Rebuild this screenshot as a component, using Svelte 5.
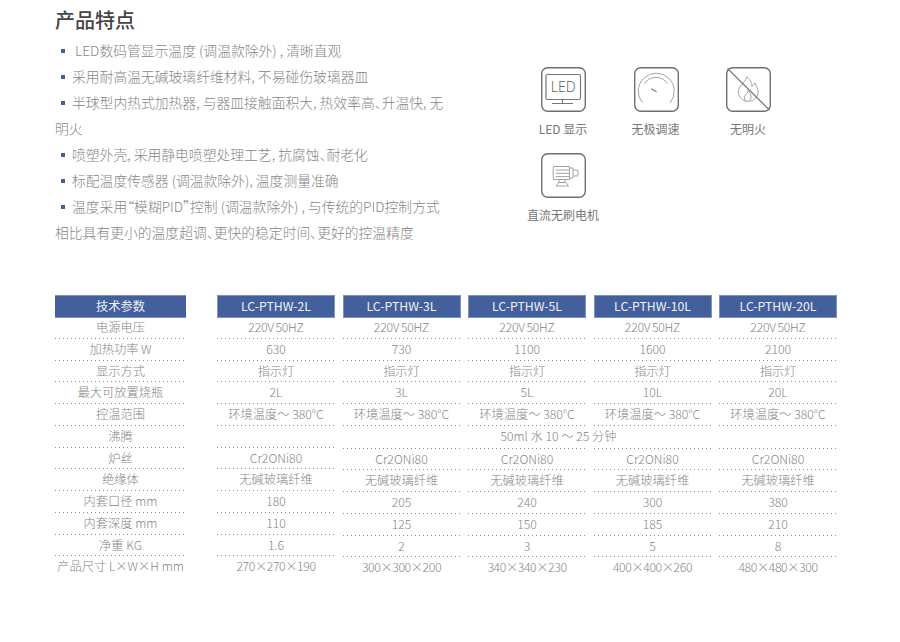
<script lang="ts">
  const features = [
    { text: 'LED数码管显示温度 (调温款除外) , 清晰直观', lead: true },
    { text: '采用耐高温无碱玻璃纤维材料, 不易碰伤玻璃器皿' },
    { text: '半球型内热式加热器, 与器皿接触面积大, 热效率高、升温快, 无明火' },
    { text: '喷塑外壳, 采用静电喷塑处理工艺, 抗腐蚀、耐老化' },
    { text: '标配温度传感器 (调温款除外), 温度测量准确' },
    { text: '温度采用“模糊PID”控制 (调温款除外) , 与传统的PID控制方式相比具有更小的温度超调、更快的稳定时间、更好的控温精度' }
  ];

  const labels = ['电源电压', '加热功率 W', '显示方式', '最大可放置烧瓶', '控温范围'];
  const lowerLabels = ['沸腾', '炉丝', '绝缘体', '内套口径 mm', '内套深度 mm', '净重 KG', '产品尺寸 L×W×H mm'];

  const models = [
    { name: 'LC-PTHW-2L', power: '630', flask: '2L', bore: '180', depth: '110', weight: '1.6', size: '270×270×190' },
    { name: 'LC-PTHW-3L', power: '730', flask: '3L', bore: '205', depth: '125', weight: '2', size: '300×300×200' },
    { name: 'LC-PTHW-5L', power: '1100', flask: '5L', bore: '240', depth: '150', weight: '3', size: '340×340×230' },
    { name: 'LC-PTHW-10L', power: '1600', flask: '10L', bore: '300', depth: '185', weight: '5', size: '400×400×260' },
    { name: 'LC-PTHW-20L', power: '2100', flask: '20L', bore: '380', depth: '210', weight: '8', size: '480×480×300' }
  ];
</script>

<main class="page">
  <section class="top">
    <div class="intro">
      <h2>产品特点</h2>
      <ul>
        {#each features as f}
          <li class:lead={f.lead}>{f.text}</li>
        {/each}
      </ul>
    </div>

    <div class="badges">
      <figure>
        <svg viewBox="0 0 46 46" width="46" height="46">
          <rect x="0.7" y="0.7" width="43.6" height="43.6" rx="6" class="frame" />
          <rect x="5" y="7.5" width="34.5" height="25" rx="1.5" class="line" />
          <path d="M11 36.5h21M21.5 33v3.5" class="line" />
          <text x="22.3" y="25" text-anchor="middle" class="led">LED</text>
        </svg>
        <figcaption>LED 显示</figcaption>
      </figure>
      <figure>
        <svg viewBox="0 0 46 46" width="46" height="46">
          <rect x="0.7" y="0.7" width="43.6" height="43.6" rx="6" class="frame" />
          <path d="M8.5 35.8A18 18 0 1 1 36 35.8" class="thin" />
          <path d="M10.5 16.8A13.5 13.5 0 0 1 33.5 16.8" class="thin" />
          <path d="M17.2 21.8l5.3 3" class="line" />
        </svg>
        <figcaption>无极调速</figcaption>
      </figure>
      <figure>
        <svg viewBox="0 0 46 46" width="46" height="46">
          <rect x="0.7" y="0.7" width="43.6" height="43.6" rx="6" class="frame" />
          <path d="M20.5 9.8c.6 4.5-7.5 8-8.2 14.5-.5 5.5 4 10 10 10s10.200-4.500 9.800-10c-.3-3.800-2.500-6-3-8.500-1.200 1.500-2.200 3-3.200 3.500.2-3.500-1.800-7.500-5.400-9.500z" class="thin" />
          <path d="M22 23.5c.4 2.5-3.5 4-3.5 7.500 0 1.500.8 2.600 2 3.200M22 23.500c2 2 3.500 4.500 3 7.500-.2 1.300-.8 2.400-2 3.200" class="thin" />
          <path d="M1.5 1.5L43.5 43" class="line" />
        </svg>
        <figcaption>无明火</figcaption>
      </figure>
      <figure>
        <svg viewBox="0 0 46 46" width="46" height="46">
          <rect x="0.7" y="0.7" width="43.6" height="43.6" rx="6" class="frame" />
          <path d="M12.5 13.5h16v13h-16q-1-6.500 0-13zM28.500 15h3.500v10h-3.500" class="thin" />
          <path d="M14.500 17h14M14.500 20.300h14M14.500 23.600h14" class="thin" />
          <path d="M32 17h4.500q1.500 3 0 6H32" class="thin" />
          <path d="M18 26.500v3h6v-3M15 33l2.500-3.500h7.500l2.500 3.500z" class="thin" />
        </svg>
        <figcaption>直流无刷电机</figcaption>
      </figure>
    </div>
  </section>

  <section class="specs">
    <div class="block">
      <div class="head label-head">技术参数</div>
      {#each models as m}
        <div class="head">{m.name}</div>
      {/each}

      {#each labels as label, i}
        <div class="cell label">{label}</div>
        {#each models as m}
          <div class="cell">
            {#if i === 0}<span class="volt">220V 50HZ</span>
            {:else if i === 1}{m.power}
            {:else if i === 2}指示灯
            {:else if i === 3}{m.flask}
            {:else}环境温度～ 380°C{/if}
          </div>
        {/each}
      {/each}
    </div>

    <div class="block lower">
      <div class="column">
        {#each lowerLabels as label}
          <div class="cell label">{label}</div>
        {/each}
      </div>
      {#each models as m, i}
        <div class="column" class:late={i > 0}>
          <div class="cell"></div>
          <div class="cell">Cr2ONi80</div>
          <div class="cell">无碱玻璃纤维</div>
          <div class="cell">{m.bore}</div>
          <div class="cell">{m.depth}</div>
          <div class="cell">{m.weight}</div>
          <div class="cell size">{m.size}</div>
        </div>
      {/each}
      <div class="boil">50ml 水 10 ～ 25 分钟</div>
    </div>
  </section>
</main>

<style>
  :global(body) {
    margin: 0;
    background: #fff;
  }

  .page {
    width: 900px;
    height: 642px;
    box-sizing: border-box;
    padding: 8px 0 0 55px;
    font-family: "Noto Sans CJK SC", "Noto Sans", sans-serif;
    font-weight: 300;
    color: #868686;
    overflow: hidden;
  }

  .top {
    display: flex;
    height: 287px;
  }

  .intro {
    width: 392px;
  }

  h2 {
    margin: 0 0 5px;
    font-size: 20px;
    line-height: 24px;
    font-weight: 500;
    color: #444;
  }

  ul {
    margin: 0;
    padding: 0;
    list-style: none;
    font-size: 13.8px;
    line-height: 26px;
    font-feature-settings: "palt";
  }

  li::before {
    content: '';
    display: inline-block;
    width: 4px;
    height: 4px;
    margin: 0 7px 2px 6px;
    background: #3f5f9f;
    vertical-align: middle;
  }

  li.lead::before {
    margin-right: 10px;
  }

  .badges {
    display: grid;
    grid-template-columns: repeat(3, 46px);
    column-gap: 46.5px;
    row-gap: 15px;
    margin: 59px 0 0 94px;
    align-content: start;
  }

  figure {
    margin: 0;
    display: flex;
    flex-direction: column;
    align-items: center;
    width: 46px;
  }

  svg {
    display: block;
  }

  figcaption {
    margin-top: 7px;
    margin-right: 2px;
    font-size: 12px;
    line-height: 18px;
    font-weight: 400;
    color: #777;
    white-space: nowrap;
  }

  .frame {
    fill: #fff;
    stroke: #6f6f6f;
    stroke-width: 1.4;
  }

  .line {
    fill: none;
    stroke: #777;
    stroke-width: 1.2;
  }

  .thin {
    fill: none;
    stroke: #999;
    stroke-width: 0.9;
  }

  .led {
    font-size: 14px;
    font-family: "Noto Sans", sans-serif;
    font-weight: 300;
    fill: #666;
  }

  .block {
    display: grid;
    grid-template-columns: 154.5px repeat(5, 118px);
    column-gap: 7.5px;
    font-size: 12.25px;
  }

  .head {
    height: 23px;
    box-sizing: border-box;
    margin-bottom: -1px;
    border: 1px solid #7e94c0;
    background: #44609c;
    color: #eef1f7;
    font-weight: 400;
    line-height: 20px;
    text-align: center;
  }

  .label-head,
  .label {
    margin-right: 23.5px;
  }

  .label-head {
    border-width: 1px 0;
  }

  .cell {
    height: 21.75px;
    box-sizing: border-box;
    line-height: 21px;
    text-align: center;
    white-space: nowrap;
    background: linear-gradient(to right, #8c8c8c 1.5px, transparent 1.5px) left bottom / 4px 1px repeat-x;
  }

  .volt {
    word-spacing: -1px;
    letter-spacing: -0.2px;
  }

  .lower {
    position: relative;
  }

  .column {
    display: flex;
    flex-direction: column;
  }

  .late {
    padding-top: 1px;
  }

  .column > .cell:last-child {
    background: none;
  }

  .size {
    letter-spacing: -0.4px;
  }

  .boil {
    position: absolute;
    top: 0;
    left: 162px;
    right: 0;
    line-height: 21px;
    text-align: center;
  }
</style>
